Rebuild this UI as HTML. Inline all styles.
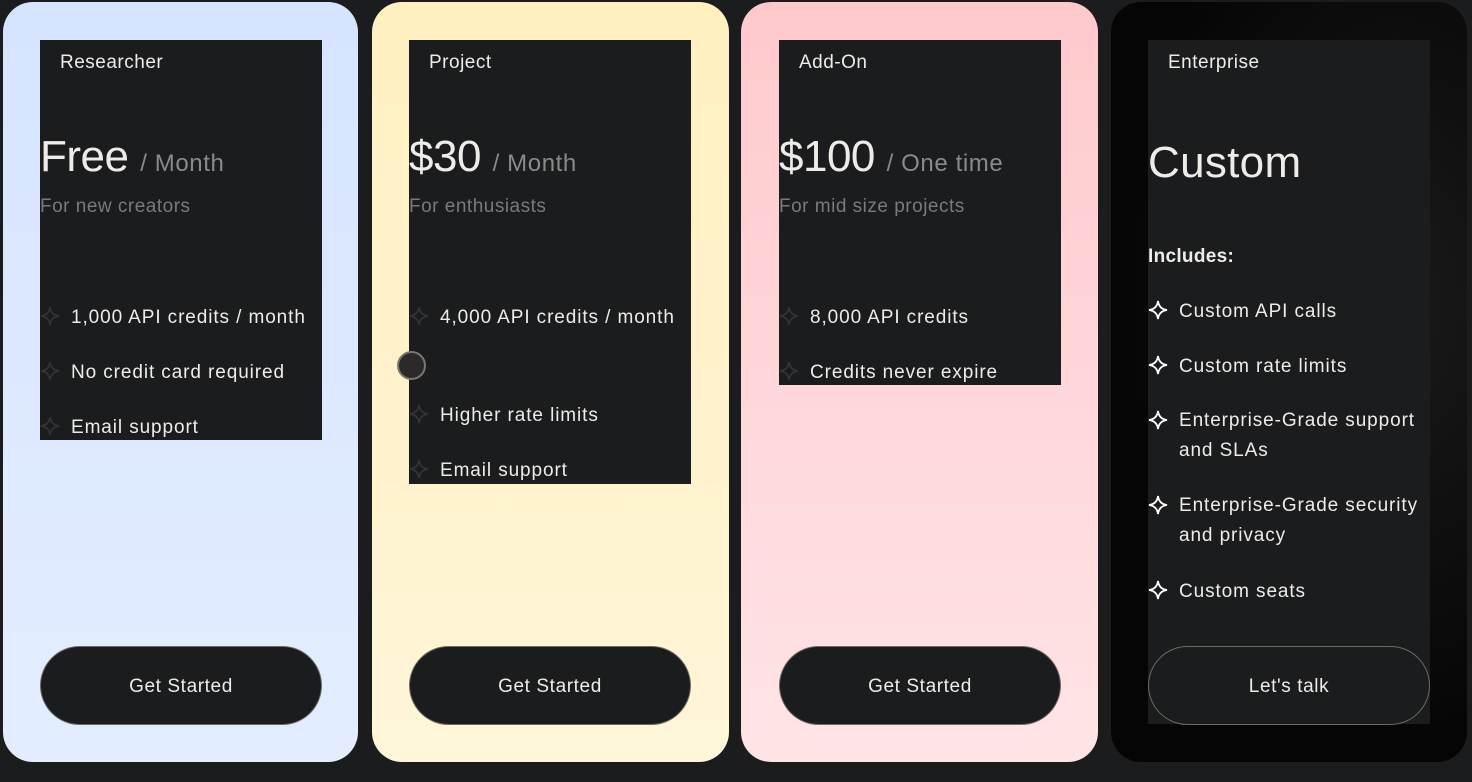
<!DOCTYPE html>
<html><head><meta charset="utf-8"><style>
*{margin:0;padding:0;box-sizing:border-box}
body{width:1472px;height:782px;background:#1b1c1e;font-family:"Liberation Sans",sans-serif;position:relative;overflow:hidden;color:#eeece8}
.card{position:absolute;top:2px;height:760px;border-radius:30px}
.box{position:absolute;background:#1b1c1e;left:37px;top:38px;width:282px}
.t{position:absolute;font-size:19px;white-space:nowrap;letter-spacing:0.9px}
.title{left:20px;top:12px;font-size:19px;letter-spacing:0.5px}
.price{left:0;top:92px;font-size:44px;letter-spacing:-0.5px}
.price span{font-size:24px;color:#8a8a8a;letter-spacing:0.6px}
.sub{left:0;top:156px;color:#7a7a7a;letter-spacing:0.5px}
.f{left:31px}
.st{position:absolute;left:0;width:20px;height:20px}
.btn{position:absolute;left:37px;top:644px;width:282px;height:79px;border-radius:40px;background:#1b1c1e;border:1px solid #6d6a62;text-align:center;line-height:79px;font-size:19px;letter-spacing:0.6px}
</style></head><body>
<svg width="0" height="0" style="position:absolute"><defs><path id="s" d="M10 1 Q11 9 19 10 Q11 11 10 19 Q9 11 1 10 Q9 9 10 1Z" fill="none" stroke-width="1.8"/></defs></svg>

<div class="card" style="left:3px;width:355px;background:linear-gradient(180deg,#d6e4ff,#e3edff)">
<div class="box" style="height:400px">
<div class="t title">Researcher</div>
<div class="t price">Free <span>/ Month</span></div>
<div class="t sub">For new creators</div>
<svg class="st" style="top:266px" viewBox="0 0 20 20"><use href="#s" stroke="#333"/></svg><div class="t f" style="top:267px">1,000 API credits / month</div>
<svg class="st" style="top:321px" viewBox="0 0 20 20"><use href="#s" stroke="#333"/></svg><div class="t f" style="top:322px">No credit card required</div>
<svg class="st" style="top:376px" viewBox="0 0 20 20"><use href="#s" stroke="#333"/></svg><div class="t f" style="top:377px">Email support</div>
</div>
<div class="btn">Get Started</div>
</div>

<div class="card" style="left:372px;width:357px;background:linear-gradient(180deg,#fff0c0,#fff5d8)">
<div class="box" style="height:444px">
<div class="t title">Project</div>
<div class="t price">$30 <span>/ Month</span></div>
<div class="t sub">For enthusiasts</div>
<svg class="st" style="top:266px" viewBox="0 0 20 20"><use href="#s" stroke="#333"/></svg><div class="t f" style="top:267px">4,000 API credits / month</div>
<svg class="st" style="top:364px" viewBox="0 0 20 20"><use href="#s" stroke="#333"/></svg><div class="t f" style="top:365px">Higher rate limits</div>
<svg class="st" style="top:419px" viewBox="0 0 20 20"><use href="#s" stroke="#333"/></svg><div class="t f" style="top:420px">Email support</div>
</div>
<div style="position:absolute;left:25px;top:349px;width:29px;height:29px;border-radius:50%;background:#2a2a2a;border:2px solid #7a776d"></div>
<div class="btn">Get Started</div>
</div>

<div class="card" style="left:741px;width:357px;background:linear-gradient(180deg,#ffc9cc,#ffe4e6)">
<div class="box" style="left:38px;height:345px">
<div class="t title">Add-On</div>
<div class="t price">$100 <span>/ One time</span></div>
<div class="t sub">For mid size projects</div>
<svg class="st" style="top:266px" viewBox="0 0 20 20"><use href="#s" stroke="#333"/></svg><div class="t f" style="top:267px">8,000 API credits</div>
<svg class="st" style="top:321px" viewBox="0 0 20 20"><use href="#s" stroke="#333"/></svg><div class="t f" style="top:322px">Credits never expire</div>
</div>
<div class="btn" style="left:38px">Get Started</div>
</div>

<div class="card" style="left:1111px;width:356px;background:radial-gradient(ellipse at 80% 40%,#1a1a1a,#050505 70%)">
<div class="box" style="height:684px">
<div class="t title">Enterprise</div>
<div class="t" style="left:0;top:98px;font-size:44px;letter-spacing:0.3px">Custom</div>
<div class="t" style="left:0;top:206px;font-weight:bold;letter-spacing:0.3px">Includes:</div>
<svg class="st" style="top:260px" viewBox="0 0 20 20"><use href="#s" stroke="#fff"/></svg><div class="t f" style="top:261px">Custom API calls</div>
<svg class="st" style="top:315px" viewBox="0 0 20 20"><use href="#s" stroke="#fff"/></svg><div class="t f" style="top:316px">Custom rate limits</div>
<svg class="st" style="top:370px" viewBox="0 0 20 20"><use href="#s" stroke="#fff"/></svg><div class="t f" style="top:366px;line-height:30px">Enterprise-Grade support<br>and SLAs</div>
<svg class="st" style="top:455px" viewBox="0 0 20 20"><use href="#s" stroke="#fff"/></svg><div class="t f" style="top:451px;line-height:30px">Enterprise-Grade security<br>and privacy</div>
<svg class="st" style="top:540px" viewBox="0 0 20 20"><use href="#s" stroke="#fff"/></svg><div class="t f" style="top:541px">Custom seats</div>
<div class="btn" style="left:0;top:606px;border-color:#6d6a62">Let's talk</div>
</div>
</div>
</body></html>
